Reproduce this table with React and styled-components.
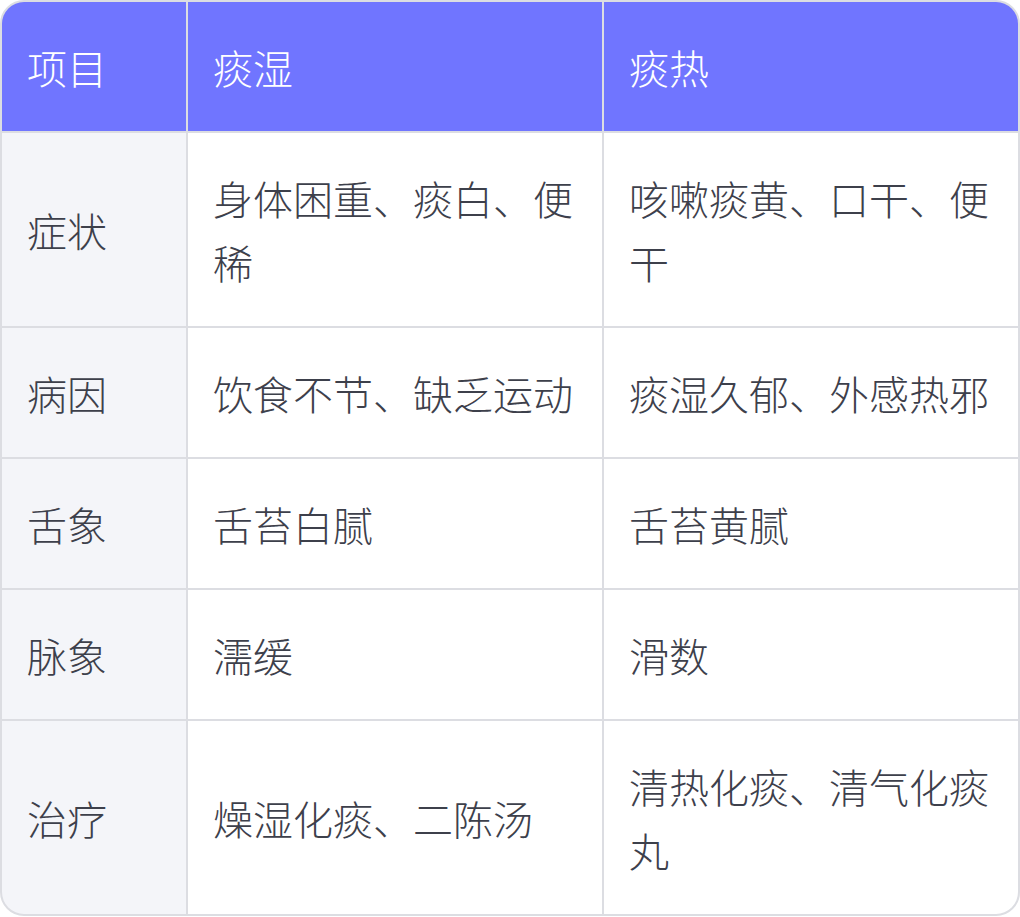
import React from 'react'
import styled, { createGlobalStyle } from 'styled-components';

const Global = createGlobalStyle`
    html, body {
        margin: 0;
        padding: 0;
        background: #ffffff;
    }
    * {
        box-sizing: border-box;
    }
`;

const Table = styled.div`
    display: grid;
    grid-template-columns: 184px 1fr 1fr;
    gap: 2px;
    width: 1020px;
    background: #dcdde2;
    border: 2.5px solid #dcdde2;
    border-radius: 24px;
    overflow: hidden;
    font-family: "Noto Sans CJK SC", "Noto Sans", sans-serif;
    font-size: 40px;
    font-weight: 300;
    line-height: 64px;
`;

const Cell = styled.div`
    display: flex;
    align-items: center;
    padding: 32.5px 24px 32.5px 25px;
    background: ${p => p.head ? '#7075ff' : p.label ? '#f4f5f9' : '#ffffff'};
    color: ${p => p.head ? '#ffffff' : '#3d404b'};
    word-break: break-all;
`;

const header = ['项目', '痰湿', '痰热'];

const rows = [
    ['症状', '身体困重、痰白、便稀', '咳嗽痰黄、口干、便干'],
    ['病因', '饮食不节、缺乏运动', '痰湿久郁、外感热邪'],
    ['舌象', '舌苔白腻', '舌苔黄腻'],
    ['脉象', '濡缓', '滑数'],
    ['治疗', '燥湿化痰、二陈汤', '清热化痰、清气化痰丸'],
];

export default function App() {
    return (
        <>
            <Global />
            <Table>
                {header.map(h => <Cell head key={h}>{h}</Cell>)}
                {rows.map(r => (
                    <React.Fragment key={r[0]}>
                        <Cell label>{r[0]}</Cell>
                        <Cell>{r[1]}</Cell>
                        <Cell>{r[2]}</Cell>
                    </React.Fragment>
                ))}
            </Table>
        </>
    )
}
